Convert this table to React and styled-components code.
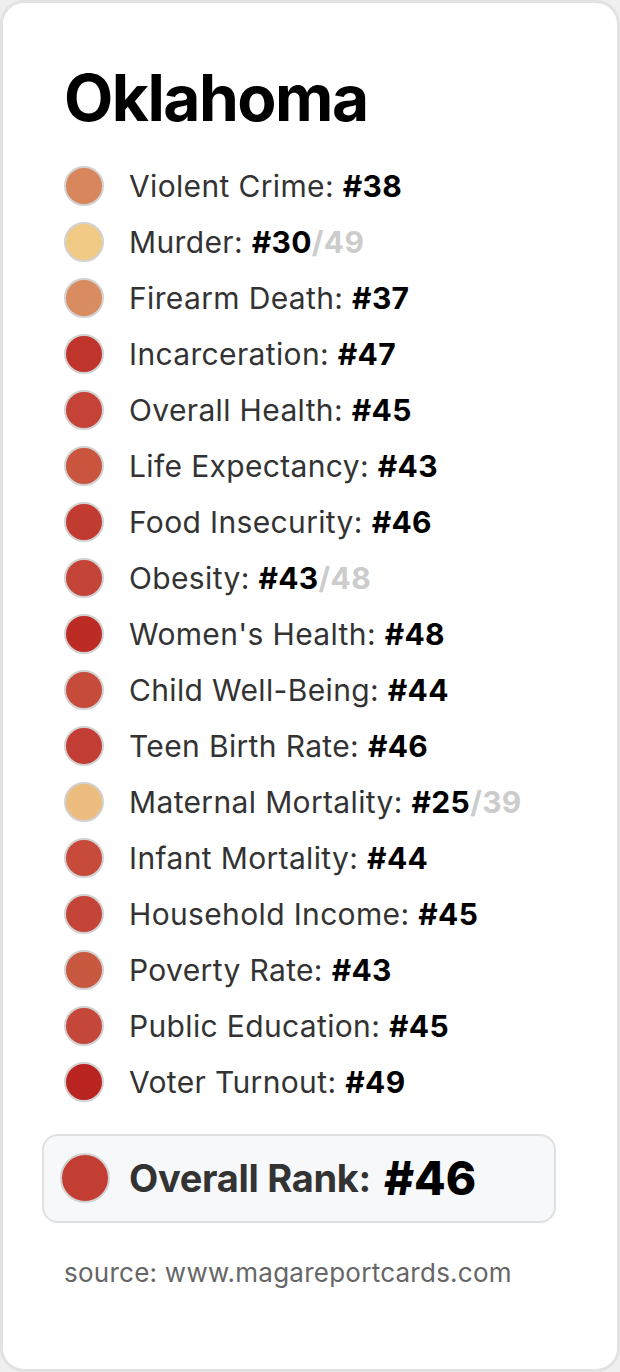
import React from 'react';
import styled, { createGlobalStyle } from 'styled-components';

const GlobalStyle = createGlobalStyle`
  html, body {
    margin: 0;
    padding: 0;
    background: #efefef;
  }
  body {
    font-family: Inter, "Noto Sans", "Liberation Sans", sans-serif;
  }
`;

const Card = styled.div`
  box-sizing: border-box;
  width: 620px;
  height: 1372px;
  background: #fff;
  border: 3px solid #e2e2e2;
  border-radius: 24px;
  padding: 57px 39px 0 39px;
`;

const Title = styled.h1`
  margin: 0 0 0 22px;
  font-size: 64px;
  line-height: 1.2;
  font-weight: 700;
  color: #000;
  letter-spacing: -1.5px;
`;

const List = styled.ul`
  list-style: none;
  margin: 29px 0 0 0;
  padding: 0 0 0 22px;
  display: flex;
  flex-direction: column;
  gap: 16px;
`;

const Row = styled.li`
  display: flex;
  align-items: center;
  height: 40px;
  gap: 25px;
  font-size: 30px;
  letter-spacing: 0.35px;
  color: #333;
`;

const Dot = styled.span`
  box-sizing: border-box;
  flex: none;
  width: ${(p) => p.size || 40}px;
  height: ${(p) => p.size || 40}px;
  border-radius: 50%;
  background: ${(p) => p.color};
  border: 2px solid #d2d2d2;
`;

const Rank = styled.b`
  font-weight: 700;
  color: #000;
`;

const OutOf = styled.b`
  font-weight: 700;
  color: #cccccc;
`;

const OverallBox = styled.div`
  box-sizing: border-box;
  width: 514px;
  height: 89px;
  margin-top: 32px;
  display: flex;
  align-items: center;
  padding-left: 16px;
  gap: 19px;
  background: #f7f8fa;
  border: 2px solid #e0e0e0;
  border-radius: 16px;
`;

const OverallLabel = styled.span`
  font-size: 38px;
  font-weight: 700;
  color: #333;
  letter-spacing: -0.3px;
`;

const OverallRank = styled.span`
  font-size: 46px;
  font-weight: 800;
  color: #000;
  margin-left: -6px;
`;

const Source = styled.p`
  margin: 34px 0 0 22px;
  font-size: 26px;
  line-height: 1.2;
  letter-spacing: 0.25px;
  color: #666;
`;

const rows = [
  { label: 'Violent Crime', rank: 38, color: '#d8875c' },
  { label: 'Murder', rank: 30, of: 49, color: '#f1ca86' },
  { label: 'Firearm Death', rank: 37, color: '#d98c5f' },
  { label: 'Incarceration', rank: 47, color: '#bf342b' },
  { label: 'Overall Health', rank: 45, color: '#c44236' },
  { label: 'Life Expectancy', rank: 43, color: '#c9553f' },
  { label: 'Food Insecurity', rank: 46, color: '#c23b31' },
  { label: 'Obesity', rank: 43, of: 48, color: '#c44538' },
  { label: "Women's Health", rank: 48, color: '#bd2b25' },
  { label: 'Child Well-Being', rank: 44, color: '#c74b3b' },
  { label: 'Teen Birth Rate', rank: 46, color: '#c23d33' },
  { label: 'Maternal Mortality', rank: 25, of: 39, color: '#ecbd7e' },
  { label: 'Infant Mortality', rank: 44, color: '#c74a3a' },
  { label: 'Household Income', rank: 45, color: '#c44437' },
  { label: 'Poverty Rate', rank: 43, color: '#c95840' },
  { label: 'Public Education', rank: 45, color: '#c4473a' },
  { label: 'Voter Turnout', rank: 49, color: '#b92420' },
];

export default function App() {
  return (
    <>
      <GlobalStyle />
      <Card>
        <Title>Oklahoma</Title>
        <List>
          {rows.map((r) => (
            <Row key={r.label}>
              <Dot color={r.color} />
              <span>
                {r.label}: <Rank>#{r.rank}</Rank>
                {r.of ? <OutOf>/{r.of}</OutOf> : null}
              </span>
            </Row>
          ))}
        </List>
        <OverallBox>
          <Dot color="#c23e32" size={50} />
          <OverallLabel>Overall Rank:</OverallLabel>
          <OverallRank>#46</OverallRank>
        </OverallBox>
        <Source>source: www.magareportcards.com</Source>
      </Card>
    </>
  );
}
